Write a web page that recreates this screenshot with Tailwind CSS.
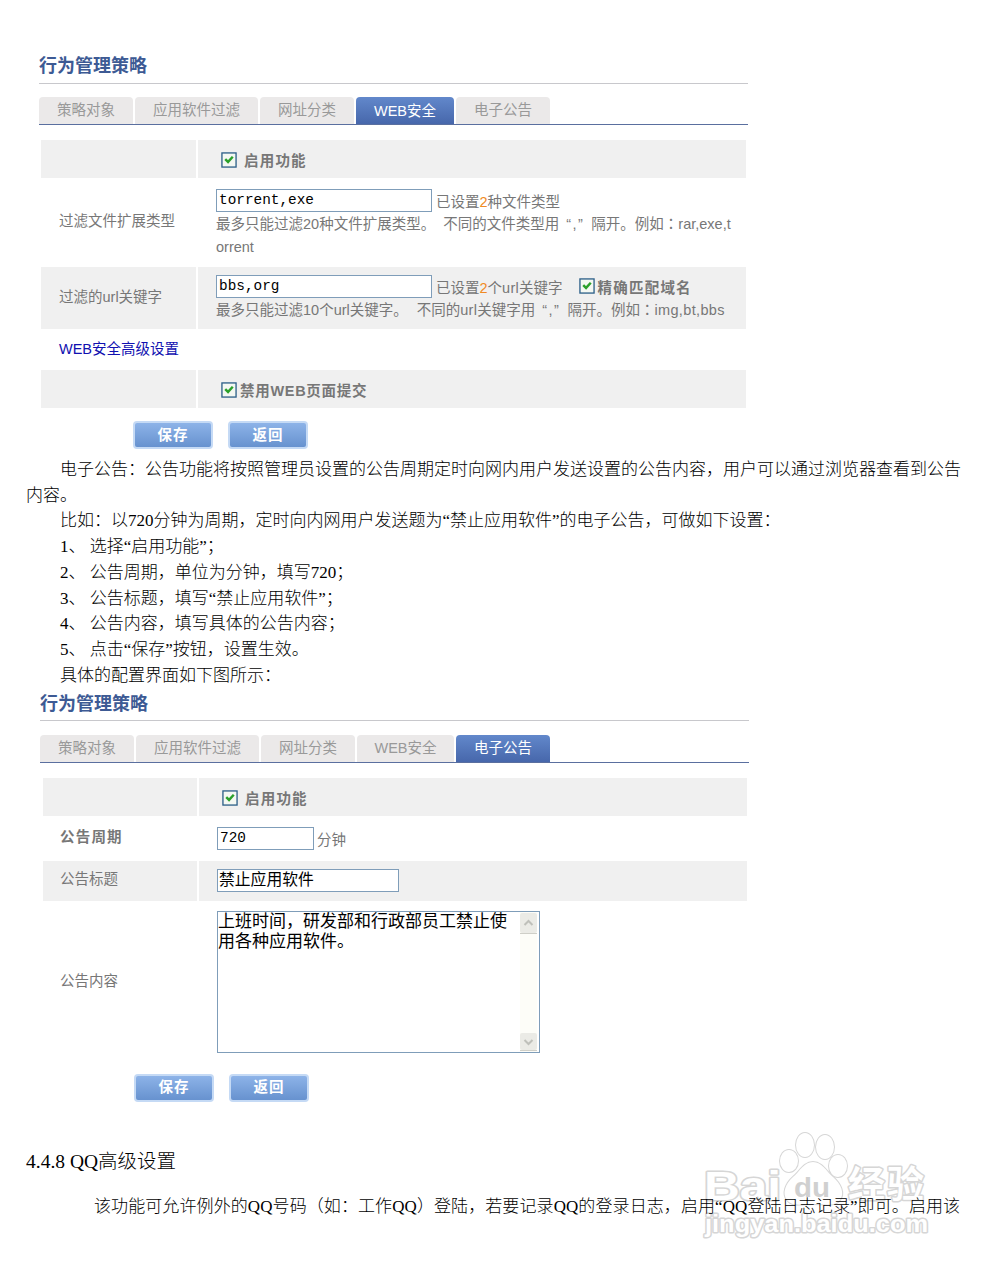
<!DOCTYPE html>
<html lang="zh-CN">
<head>
    <meta charset="UTF-8">
    <meta name="viewport" content="width=device-width, initial-scale=1.0">
    <title>行为管理策略</title>
    <script src="https://cdn.jsdelivr.net/npm/@tailwindcss/browser@4"></script>
</head>
<body class="bg-white">
<div class="relative w-[989px] h-[1280px] overflow-hidden pt-[52px] whitespace-nowrap text-black">

    <!-- WEB安全 -->
    <section class="ml-[39px] w-[709px] h-[404px] font-['Liberation_Sans','Noto_Sans_CJK_SC',sans-serif] text-[14.5px] leading-[22px] text-[#777]">
        <h2 class="h-[32px] leading-[29px] text-[18px] font-bold text-[#3d5a94] border-b border-[#c8c8cc]">行为管理策略</h2>
        <div class="mt-[13px] h-[28px] flex items-end gap-[2px] border-b border-[#5a6f9f] leading-[26px] text-[#999] text-center">
            <div class="w-[94px] h-[27px] rounded-t bg-[#ebe9e9]">策略对象</div>
            <div class="w-[123px] h-[27px] rounded-t bg-[#ebe9e9]">应用软件过滤</div>
            <div class="w-[94px] h-[27px] rounded-t bg-[#ebe9e9]">网址分类</div>
            <div class="w-[98px] h-[27px] rounded-t bg-linear-to-b from-[#6288cb] to-[#4767ab] text-white leading-[29px]">WEB安全</div>
            <div class="w-[94px] h-[27px] rounded-t bg-[#ebe9e9]">电子公告</div>
        </div>
        <div class="ml-[2px] mt-[15px] w-[705px]">
            <div class="flex gap-[2px] h-[38px]">
                <div class="w-[155px] bg-[#f0f0f0]"></div>
                <div class="flex-1 bg-[#f0f0f0] flex items-center pl-[23px] pt-[4px]">
                    <svg class="-mt-[3px] mr-[7px]" width="16" height="16" viewBox="0 0 17 17"><rect x="1" y="1" width="15" height="15" fill="#f4f8f2" stroke="#2c5f88" stroke-width="1.4"/><path d="M4.5 7.5l3 3 5-5.5" fill="none" stroke="#2ba02b" stroke-width="2.6"/></svg>
                    <b class="tracking-[1.2px]">启用功能</b>
                </div>
            </div>
            <div class="flex gap-[2px] h-[89px]">
                <div class="w-[155px] pl-[18px] leading-[87px]">过滤文件扩展类型</div>
                <div class="flex-1 pl-[18px] pt-[11px]">
                    <div class="flex h-[24px]">
                        <div class="w-[216px] h-[23px] border border-[#7f9db9] bg-white pl-[2px] leading-[21px] font-['Liberation_Mono',monospace] text-[14.4px] text-black">torrent,exe</div>
                        <div class="ml-[4px] pt-[2px]">已设置<span class="text-[#f08a24]">2</span>种文件类型</div>
                    </div>
                    <div class="leading-[23px]">最多只能过滤20种文件扩展类型。<span class="ml-[8px]">不同的文件类型用</span><span class="ml-[7px] mr-[7px] tracking-[1.5px]">“,”</span>隔开。例如<span lang="zh-TW" class="font-['Noto_Sans_CJK_TC',sans-serif] leading-none">：</span>rar,exe,t<br>orrent</div>
                </div>
            </div>
            <div class="flex gap-[2px] h-[62px]">
                <div class="w-[155px] bg-[#f0f0f0] pl-[18px] leading-[60px]">过滤的url关键字</div>
                <div class="flex-1 bg-[#f0f0f0] pl-[18px] pt-[8px]">
                    <div class="flex h-[24px]">
                        <div class="w-[216px] h-[23px] border border-[#7f9db9] bg-white pl-[2px] leading-[21px] font-['Liberation_Mono',monospace] text-[14.4px] text-black">bbs,org</div>
                        <div class="ml-[4px] pt-[2px]">已设置<span class="text-[#f08a24]">2</span>个<span class="tracking-[0.3px]">url</span>关键字</div>
                        <svg class="ml-[16px] mt-[3px] mr-[3px]" width="16" height="16" viewBox="0 0 17 17"><rect x="1" y="1" width="15" height="15" fill="#f4f8f2" stroke="#2c5f88" stroke-width="1.4"/><path d="M4.5 7.5l3 3 5-5.5" fill="none" stroke="#2ba02b" stroke-width="2.6"/></svg>
                        <b class="pt-[2px] tracking-[1.2px]">精确匹配域名</b>
                    </div>
                    <div>最多只能过滤10个url关键字。<span class="ml-[9px]">不同的<span class="tracking-[0.3px]">url</span>关键字用</span><span class="ml-[7px] mr-[7px] tracking-[1.5px]">“,”</span>隔开。例如<span lang="zh-TW" class="font-['Noto_Sans_CJK_TC',sans-serif] leading-none">：</span><span class="tracking-[0.35px]">img,bt,bbs</span></div>
                </div>
            </div>
            <div class="h-[41px] pl-[18px] leading-[40px] text-[#1010b0]">WEB安全高级设置</div>
            <div class="flex gap-[2px] h-[38px]">
                <div class="w-[155px] bg-[#f0f0f0]"></div>
                <div class="flex-1 bg-[#f0f0f0] flex items-center pl-[23px] pt-[4px]">
                    <svg class="-mt-[3px] mr-[3px]" width="16" height="16" viewBox="0 0 17 17"><rect x="1" y="1" width="15" height="15" fill="#f4f8f2" stroke="#2c5f88" stroke-width="1.4"/><path d="M4.5 7.5l3 3 5-5.5" fill="none" stroke="#2ba02b" stroke-width="2.6"/></svg>
                    <b class="tracking-[0.7px]">禁用WEB页面提交</b>
                </div>
            </div>
        </div>
        <div class="mt-[13px] ml-[94px] flex gap-[15px] text-white font-bold text-center leading-[24px] tracking-[1px]">
            <div class="w-[80px] h-[28px] rounded border-2 border-[#c5daf5] bg-linear-to-b from-[#8db3e8] to-[#6792cf]">保存</div>
            <div class="w-[80px] h-[28px] rounded border-2 border-[#c5daf5] bg-linear-to-b from-[#8db3e8] to-[#6792cf]">返回</div>
        </div>
    </section>

    <!-- 正文说明 -->
    <article class="ml-[26px] h-[234px] pt-px font-['Liberation_Serif','Noto_Sans_CJK_SC',serif] font-light text-[17px] leading-[25.7px] text-black">
        <p class="indent-[34px]">电子公告：公告功能将按照管理员设置的公告周期定时向网内用户发送设置的公告内容，用户可以通过浏览器查看到公告<br>内容。</p>
        <p class="indent-[34px]">比如：以720分钟为周期，定时向内网用户发送题为“禁止应用软件”的电子公告，可做如下设置：</p>
        <p class="indent-[34px]">1、 选择“启用功能”；</p>
        <p class="indent-[34px]">2、 公告周期，单位为分钟，填写720；</p>
        <p class="indent-[34px]">3、 公告标题，填写“禁止应用软件”；</p>
        <p class="indent-[34px]">4、 公告内容，填写具体的公告内容；</p>
        <p class="indent-[34px]">5、 点击“保存”按钮，设置生效。</p>
        <p class="indent-[34px]">具体的配置界面如下图所示：</p>
    </article>

    <!-- 电子公告 -->
    <section class="ml-[40px] w-[709px] h-[412px] font-['Liberation_Sans','Noto_Sans_CJK_SC',sans-serif] text-[14.5px] leading-[22px] text-[#777]">
        <h2 class="h-[31px] leading-[28px] text-[18px] font-bold text-[#3d5a94] border-b border-[#c8c8cc]">行为管理策略</h2>
        <div class="mt-[14px] h-[28px] flex items-end gap-[2px] border-b border-[#5a6f9f] leading-[26px] text-[#999] text-center">
            <div class="w-[94px] h-[27px] rounded-t bg-[#ebe9e9]">策略对象</div>
            <div class="w-[123px] h-[27px] rounded-t bg-[#ebe9e9]">应用软件过滤</div>
            <div class="w-[94px] h-[27px] rounded-t bg-[#ebe9e9]">网址分类</div>
            <div class="w-[97px] h-[27px] rounded-t bg-[#ebe9e9] leading-[27px]">WEB安全</div>
            <div class="w-[94px] h-[27px] rounded-t bg-linear-to-b from-[#6288cb] to-[#4767ab] text-white leading-[27px]">电子公告</div>
        </div>
        <div class="ml-[3px] mt-[15px] w-[704px]">
            <div class="flex gap-[2px] h-[38px]">
                <div class="w-[154px] bg-[#f0f0f0]"></div>
                <div class="flex-1 bg-[#f0f0f0] flex items-center pl-[23px] pt-[4px]">
                    <svg class="-mt-[3px] mr-[7px]" width="16" height="16" viewBox="0 0 17 17"><rect x="1" y="1" width="15" height="15" fill="#f4f8f2" stroke="#2c5f88" stroke-width="1.4"/><path d="M4.5 7.5l3 3 5-5.5" fill="none" stroke="#2ba02b" stroke-width="2.6"/></svg>
                    <b class="tracking-[1.2px]">启用功能</b>
                </div>
            </div>
            <div class="flex gap-[2px] h-[45px]">
                <div class="w-[154px] pl-[17px] leading-[42px] font-bold tracking-[1.2px]">公告周期</div>
                <div class="flex-1 pl-[18px] pt-[11px] flex">
                    <div class="w-[97px] h-[23px] border border-[#7f9db9] pl-[2px] leading-[21px] font-['Liberation_Mono',monospace] text-[14.4px] text-black">720</div>
                    <div class="ml-[3px] pt-[2px]">分钟</div>
                </div>
            </div>
            <div class="flex gap-[2px] h-[40px]">
                <div class="w-[154px] bg-[#f0f0f0] pl-[17px] leading-[37px]">公告标题</div>
                <div class="flex-1 bg-[#f0f0f0] pl-[18px] pt-[8px]">
                    <div class="w-[182px] h-[23px] border border-[#7f9db9] bg-white pl-px leading-[20px] text-[15.8px] text-black">禁止应用软件</div>
                </div>
            </div>
            <div class="flex gap-[2px] h-[161px]">
                <div class="w-[154px] pl-[17px] leading-[160px]">公告内容</div>
                <div class="pl-[18px] pt-[10px]">
                    <div class="w-[323px] h-[142px] border border-[#7f9db9] flex justify-between text-black text-[17px] leading-[19.5px]">
                        <div>上班时间，研发部和行政部员工禁止使<br>用各种应用软件。</div>
                        <div class="w-[17px] mr-[2px] shrink-0 bg-[#fdfdf8] flex flex-col justify-between py-px">
                            <svg width="17" height="21" viewBox="0 0 17 21"><rect width="17" height="20" rx="2" fill="#ebebe6"/><path d="M0 20.5h17" stroke="#cfcfc8"/><path d="M4.5 12l4-4 4 4" fill="none" stroke="#bfc0ba" stroke-width="2"/></svg>
                            <svg width="17" height="18" viewBox="0 0 17 18"><rect width="17" height="17" rx="2" fill="#ebebe6"/><path d="M0 17.5h17" stroke="#cfcfc8"/><path d="M4.5 7l4 4 4-4" fill="none" stroke="#bfc0ba" stroke-width="2"/></svg>
                        </div>
                    </div>
                </div>
            </div>
        </div>
        <div class="mt-[12px] ml-[94px] flex gap-[15px] text-white font-bold text-center leading-[23px] tracking-[1px]">
            <div class="w-[80px] h-[28px] rounded border-2 border-[#c5daf5] bg-linear-to-b from-[#8db3e8] to-[#6792cf]">保存</div>
            <div class="w-[80px] h-[28px] rounded border-2 border-[#c5daf5] bg-linear-to-b from-[#8db3e8] to-[#6792cf]">返回</div>
        </div>
    </section>

    <div class="relative z-10 ml-[26px] pt-[46px] font-['Liberation_Serif','Noto_Sans_CJK_SC',serif] font-light text-black">
        <h3 class="text-[19.5px] leading-[28px]">4.4.8 QQ高级设置</h3>
        <p class="mt-[18px] pl-[68px] text-[17px] leading-[26px] tracking-[0.09px]">该功能可允许例外的QQ号码（如：工作QQ）登陆，若要记录QQ的登录日志，启用“QQ登陆日志记录”即可。启用该</p>
    </div>

    <!-- 水印 -->
    <svg class="absolute left-[695px] top-[1125px]" width="245" height="120" viewBox="0 0 245 120" fill="#fff" stroke="#d6d6d6" stroke-linejoin="round" paint-order="stroke">
        <g font-family="Liberation Sans, Noto Sans CJK SC, sans-serif" font-weight="bold" stroke-width="3">
            <text x="9" y="75" font-size="41" textLength="77" lengthAdjust="spacingAndGlyphs">Bai</text>
            <text x="153" y="73" font-size="37" textLength="76">经验</text>
            <text x="10" y="107" font-size="24" textLength="223" lengthAdjust="spacingAndGlyphs">jingyan.baidu.com</text>
        </g>
        <g stroke-width="2">
            <ellipse cx="94" cy="36" rx="9" ry="11"/>
            <ellipse cx="110" cy="20" rx="9" ry="12"/>
            <ellipse cx="130" cy="22" rx="9" ry="12"/>
            <ellipse cx="143" cy="41" rx="9" ry="11"/>
            <path d="M118 37c-9 0-13 9-20 15-8 7-11 17-6 23 5 7 15 4 26 4s22 3 27-4c5-7 1-16-7-23-7-6-11-15-20-15z"/>
        </g>
        <text x="99" y="72" font-family="Liberation Sans, sans-serif" font-weight="bold" font-size="27" textLength="36" lengthAdjust="spacingAndGlyphs" fill="#d0d0d0" stroke="none">du</text>
    </svg>
</div>
</body>
</html>
